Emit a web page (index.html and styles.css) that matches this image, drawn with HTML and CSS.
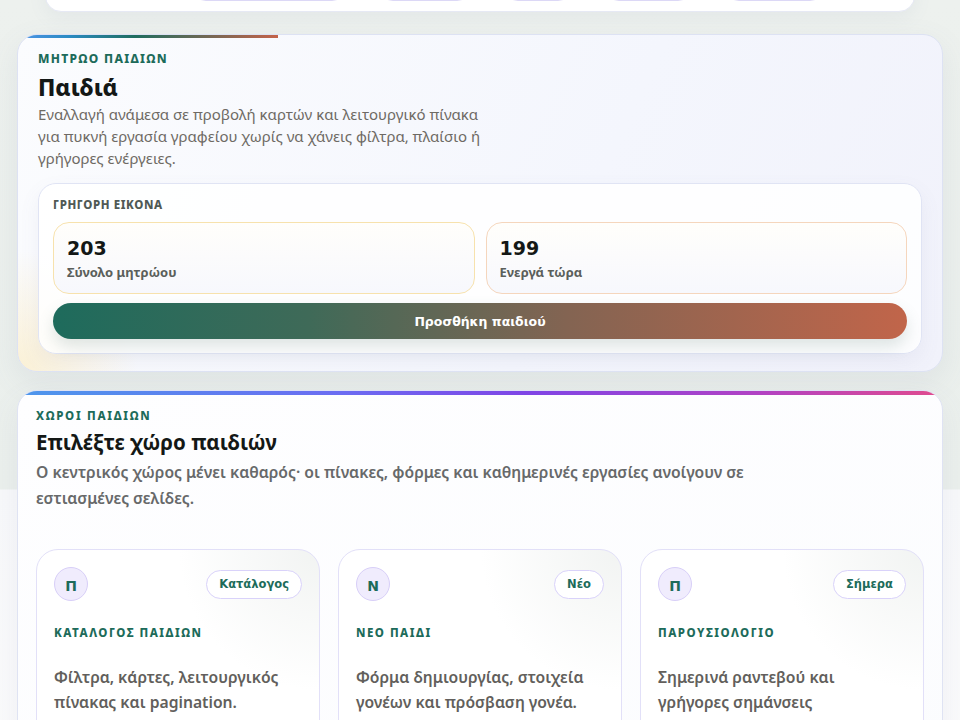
FILE: index.html
```html
<!DOCTYPE html>
<html lang="el">
<head>
    <meta charset="UTF-8">
    <meta name="viewport" content="width=device-width, initial-scale=1.0">
    <title>Παιδιά</title>
    <link rel="stylesheet" href="styles.css">
</head>
<body>

    <div class="page">

        <!-- bottom of the filter card above, scrolled away -->
        <div class="top-card">
            <div class="top-pills">
                <span class="top-pill pill-a"></span>
                <span class="top-pill pill-b"></span>
                <span class="top-pill pill-c"></span>
                <span class="top-pill pill-d"></span>
                <span class="top-pill pill-e"></span>
            </div>
        </div>

        <section class="hero-card">
            <div class="accent accent-warm"></div>
            <p class="eyebrow">ΜΗΤΡΩΟ ΠΑΙΔΙΩΝ</p>
            <h1 class="hero-title">Παιδιά</h1>
            <p class="hero-text">Εναλλαγή ανάμεσα σε προβολή καρτών και λειτουργικό πίνακα για πυκνή εργασία γραφείου χωρίς να χάνεις φίλτρα, πλαίσιο ή γρήγορες ενέργειες.</p>

            <div class="quick-panel">
                <p class="panel-label">ΓΡΗΓΟΡΗ ΕΙΚΟΝΑ</p>
                <div class="stats">
                    <div class="stat stat-total">
                        <div class="stat-number">203</div>
                        <div class="stat-label">Σύνολο μητρώου</div>
                    </div>
                    <div class="stat stat-active">
                        <div class="stat-number">199</div>
                        <div class="stat-label">Ενεργά τώρα</div>
                    </div>
                </div>
                <button class="add-button" type="button">Προσθήκη παιδιού</button>
            </div>
        </section>

        <section class="spaces-card">
            <div class="accent accent-cool"></div>
            <p class="eyebrow">ΧΩΡΟΙ ΠΑΙΔΙΩΝ</p>
            <h2 class="spaces-title">Επιλέξτε χώρο παιδιών</h2>
            <p class="spaces-text">Ο κεντρικός χώρος μένει καθαρός· οι πίνακες, φόρμες και καθημερινές εργασίες ανοίγουν σε εστιασμένες σελίδες.</p>

            <div class="space-grid">
                <a class="space" href="#">
                    <div class="space-head">
                        <span class="space-icon">Π</span>
                        <span class="space-tag">Κατάλογος</span>
                    </div>
                    <p class="space-name">ΚΑΤΑΛΟΓΟΣ ΠΑΙΔΙΩΝ</p>
                    <p class="space-text">Φίλτρα, κάρτες, λειτουργικός πίνακας και pagination.</p>
                </a>
                <a class="space" href="#">
                    <div class="space-head">
                        <span class="space-icon">Ν</span>
                        <span class="space-tag">Νέο</span>
                    </div>
                    <p class="space-name">ΝΕΟ ΠΑΙΔΙ</p>
                    <p class="space-text">Φόρμα δημιουργίας, στοιχεία γονέων και πρόσβαση γονέα.</p>
                </a>
                <a class="space" href="#">
                    <div class="space-head">
                        <span class="space-icon">Π</span>
                        <span class="space-tag">Σήμερα</span>
                    </div>
                    <p class="space-name">ΠΑΡΟΥΣΙΟΛΟΓΙΟ</p>
                    <p class="space-text">Σημερινά ραντεβού και γρήγορες σημάνσεις παρουσίας.</p>
                </a>
            </div>
        </section>

    </div>

</body>
</html>
```

FILE: styles.css
```css
/* page background: soft green-grey band that fades into white */
body {
    margin: 0;
    padding: 0;
    font-family: "Noto Sans", "Open Sans", sans-serif;
    color: #161a18;
    background:
        linear-gradient(to bottom, #edf1ee 0, #eaefec 489px, #f7f8fa 490px, #fbfbfc 100%);
    min-height: 100vh;
    overflow: hidden;
}

p {
    margin: 0;
}

.page {
    display: flex;
    flex-direction: column;
    padding: 0 17px;
}

/* tail end of the card above (scrolled out of view) */
.top-card {
    margin: -70px 28px 0;
    padding: 40px 0 10px 145px;
    background: #ffffff;
    border: 1px solid #e6e9f4;
    border-radius: 16px;
    box-shadow: 0 6px 18px rgba(120, 130, 160, 0.08);
}

.top-pills {
    display: flex;
    gap: 31px;
}

.top-pill {
    height: 30px;
    border: 1px solid #dcd8f6;
    border-radius: 999px;
    box-sizing: border-box;
}

.pill-a { width: 156px; }
.pill-b { width: 94px; }
.pill-c { width: 70px; }
.pill-d { width: 89px; }
.pill-e { width: 101px; }

.hero-card {
    position: relative;
    margin-top: 22px;
    padding: 16px 20px 17px;
    border: 1px solid #dde2f3;
    border-radius: 20px;
    background:
        radial-gradient(circle at 0 100%, rgba(251, 236, 196, 0.7) 0, rgba(251, 236, 196, 0) 120px),
        linear-gradient(115deg, #fbfcfe 0%, #f4f6fd 60%, #f1f2fb 100%);
    box-shadow: 0 10px 30px rgba(110, 120, 150, 0.10);
    overflow: hidden;
}

.accent {
    position: absolute;
    top: 0;
    left: 0;
    height: 3px;
}

.accent-warm {
    width: 260px;
    background: linear-gradient(90deg, #4f95e8 0%, #2a8bc2 20%, #1f6d5e 45%, #c4634a 100%);
}

.accent-cool {
    right: 0;
    height: 4px;
    background: linear-gradient(90deg, #4e97ec 0%, #6b6cf2 35%, #7f45e6 55%, #b142c4 80%, #e04b8e 100%);
}

.eyebrow {
    font-size: 12px;
    line-height: 16px;
    font-weight: 800;
    letter-spacing: 1.3px;
    color: #1d6b5a;
}

.hero-title {
    margin: 5px 0 1px;
    font-size: 23px;
    line-height: 30px;
    font-weight: 800;
    color: #141816;
}

.hero-text {
    max-width: 450px;
    font-size: 15px;
    line-height: 22px;
    color: #6e6a64;
}

.quick-panel {
    margin-top: 14px;
    padding: 13px 14px 14px;
    background: rgba(255, 255, 255, 0.85);
    border: 1px solid #e0e4f4;
    border-radius: 18px;
    box-shadow: 0 8px 20px rgba(110, 120, 150, 0.08);
}

.panel-label {
    font-size: 11.5px;
    line-height: 16px;
    font-weight: 800;
    letter-spacing: 0.6px;
    color: #505955;
}

.stats {
    display: grid;
    grid-template-columns: 1fr 1fr;
    gap: 11px;
    margin-top: 9px;
}

.stat {
    height: 72px;
    box-sizing: border-box;
    padding: 12px 13px;
    border-radius: 16px;
    background: linear-gradient(180deg, #fffefb 0%, #f7f8fd 100%);
}

.stat-total {
    border: 1px solid #f7e2ad;
}

.stat-active {
    border: 1px solid #f5d6bd;
}

.stat-number {
    font-family: "DejaVu Sans", sans-serif;
    font-size: 19px;
    line-height: 26px;
    font-weight: 700;
    color: #141816;
}

.stat-label {
    margin-top: 2px;
    font-size: 13px;
    line-height: 18px;
    font-weight: 700;
    color: #5b5f5b;
}

.add-button {
    display: block;
    width: 100%;
    height: 36px;
    margin-top: 9px;
    border: none;
    border-radius: 999px;
    background: linear-gradient(90deg, #1e6b5c 0%, #3f6a58 30%, #836452 60%, #c1654a 100%);
    color: #ffffff;
    font-family: "DejaVu Sans", sans-serif;
    font-size: 12.5px;
    font-weight: 700;
    cursor: pointer;
    box-shadow: 0 8px 16px rgba(80, 110, 100, 0.18);
}

.spaces-card {
    position: relative;
    margin-top: 18px;
    padding: 17px 18px 30px;
    border: 1px solid #dfe3f3;
    border-radius: 20px;
    background: linear-gradient(160deg, #fefeff 0%, #fbfcfe 100%);
    box-shadow: 0 10px 30px rgba(110, 120, 150, 0.08);
    overflow: hidden;
}

.spaces-card .eyebrow {
    font-size: 11.5px;
    letter-spacing: 1.7px;
}

.spaces-title {
    margin: 3px 0 0;
    font-size: 20.5px;
    line-height: 30px;
    font-weight: 700;
    color: #141816;
}

.spaces-text {
    max-width: 740px;
    margin-top: 2px;
    font-size: 15.7px;
    line-height: 26px;
    font-weight: 600;
    color: #67696a;
}

.space-grid {
    display: grid;
    grid-template-columns: repeat(3, 1fr);
    gap: 18px;
    margin-top: 38px;
}

.space {
    display: block;
    padding: 17px 17px 20px;
    border: 1px solid #e2e0f8;
    border-radius: 22px;
    text-decoration: none;
    background:
        radial-gradient(circle at 100% 0, rgba(236, 239, 237, 0.7) 0, rgba(255, 255, 255, 0) 140px),
        #ffffff;
    min-height: 200px;
}

.space-head {
    display: flex;
    justify-content: space-between;
    align-items: center;
}

.space-icon {
    width: 34px;
    height: 34px;
    box-sizing: border-box;
    display: flex;
    align-items: center;
    justify-content: center;
    border: 1px solid #d8cff8;
    border-radius: 50%;
    background: #f0ecfd;
    color: #1d6b5a;
    font-family: "DejaVu Sans", sans-serif;
    font-size: 14px;
    font-weight: 700;
    padding-top: 3px;
}

.space-tag {
    height: 29px;
    box-sizing: border-box;
    padding: 0 12px;
    display: flex;
    align-items: center;
    border: 1px solid #d9d2fa;
    border-radius: 999px;
    background: #ffffff;
    color: #1d6b5a;
    font-family: "DejaVu Sans", sans-serif;
    font-size: 11.5px;
    font-weight: 700;
}

.space-name {
    margin-top: 24px;
    font-size: 11.5px;
    line-height: 16px;
    font-weight: 800;
    letter-spacing: 1.5px;
    color: #1d6b5a;
}

.space-text {
    margin-top: 24px;
    padding-right: 14px;
    font-size: 15.7px;
    line-height: 25px;
    font-weight: 600;
    color: #625f5c;
}
```
